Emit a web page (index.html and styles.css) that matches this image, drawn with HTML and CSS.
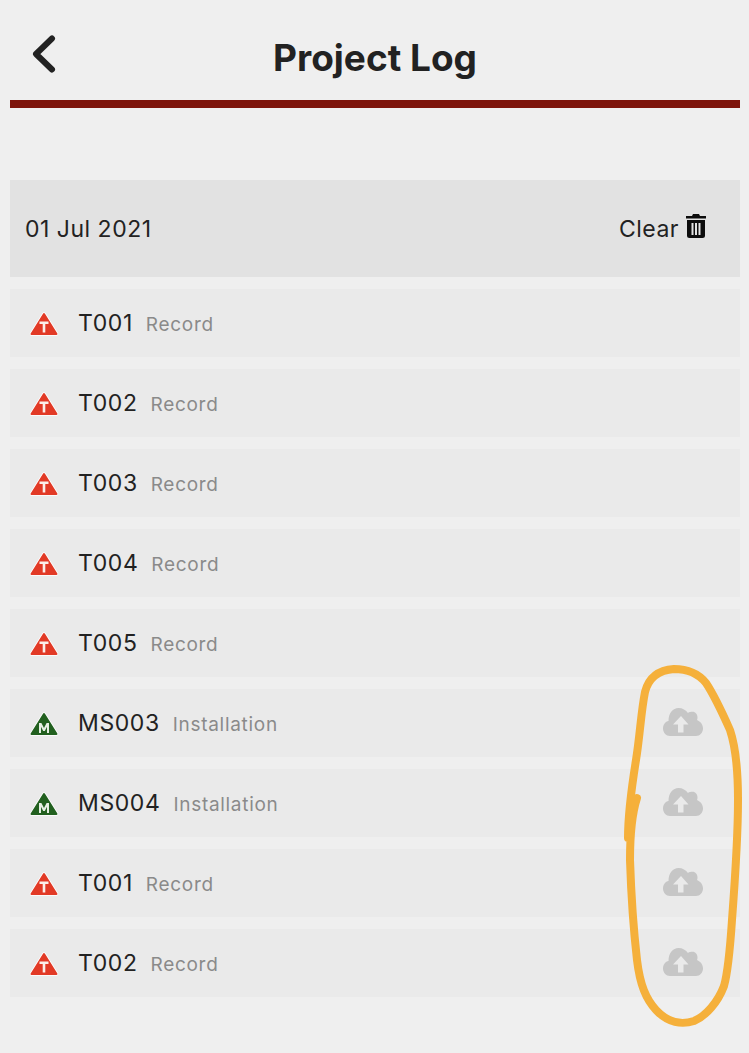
FILE: index.html
```html
<!DOCTYPE html>
<html lang="en">
<head>
    <meta charset="UTF-8">
    <meta name="viewport" content="width=device-width, initial-scale=1.0">
    <title>Project Log</title>
    <link rel="stylesheet" href="styles.css">
</head>
<body>
    <!-- Page title with back arrow -->
    <header class="topBar">
        <svg class="backIcon" viewBox="0 0 26 40" aria-hidden="true">
            <path d="M22 3.500 L6 19 L22 34.500" />
        </svg>
        <h1>Project Log</h1>
    </header>

    <section class="dateRow">
        <span class="dateText">01 Jul 2021</span>
        <span class="clearBtn">
            Clear
            <svg class="trashIcon" viewBox="0 0 22 24" aria-hidden="true">
                <path d="M8 0 H14 L15 2 H21 V4.500 H1 V2 H7 Z" />
                <path fill-rule="evenodd" d="M2 6 H20 V21.500 Q20 24 17.500 24 H4.500 Q2 24 2 21.500 Z M6.500 9 V21 H8.500 V9 Z M10 9 V21 H12 V9 Z M13.500 9 V21 H15.500 V9 Z" />
            </svg>
        </span>
    </section>

    <!-- Log items -->
    <ul class="logList">
        <li class="logRow">
            <svg class="typeIcon" viewBox="0 0 30 28"><use href="#triRed" /></svg>
            <span class="logName">T001</span><span class="logType">Record</span>
        </li>
        <li class="logRow">
            <svg class="typeIcon" viewBox="0 0 30 28"><use href="#triRed" /></svg>
            <span class="logName">T002</span><span class="logType">Record</span>
        </li>
        <li class="logRow">
            <svg class="typeIcon" viewBox="0 0 30 28"><use href="#triRed" /></svg>
            <span class="logName">T003</span><span class="logType">Record</span>
        </li>
        <li class="logRow">
            <svg class="typeIcon" viewBox="0 0 30 28"><use href="#triRed" /></svg>
            <span class="logName">T004</span><span class="logType">Record</span>
        </li>
        <li class="logRow">
            <svg class="typeIcon" viewBox="0 0 30 28"><use href="#triRed" /></svg>
            <span class="logName">T005</span><span class="logType">Record</span>
        </li>
        <li class="logRow">
            <svg class="typeIcon" viewBox="0 0 30 28"><use href="#triGreen" /></svg>
            <span class="logName">MS003</span><span class="logType">Installation</span>
            <svg class="cloudIcon" viewBox="0 0 40 28"><use href="#cloud" /></svg>
        </li>
        <li class="logRow">
            <svg class="typeIcon" viewBox="0 0 30 28"><use href="#triGreen" /></svg>
            <span class="logName">MS004</span><span class="logType">Installation</span>
            <svg class="cloudIcon" viewBox="0 0 40 28"><use href="#cloud" /></svg>
        </li>
        <li class="logRow">
            <svg class="typeIcon" viewBox="0 0 30 28"><use href="#triRed" /></svg>
            <span class="logName">T001</span><span class="logType">Record</span>
            <svg class="cloudIcon" viewBox="0 0 40 28"><use href="#cloud" /></svg>
        </li>
        <li class="logRow">
            <svg class="typeIcon" viewBox="0 0 30 28"><use href="#triRed" /></svg>
            <span class="logName">T002</span><span class="logType">Record</span>
            <svg class="cloudIcon" viewBox="0 0 40 28"><use href="#cloud" /></svg>
        </li>
    </ul>

    <!-- Hand drawn marker circle over the cloud icons -->
    <svg class="scribble" viewBox="0 0 749 1053" aria-hidden="true">
        <path d="M628 838 C628 815 632 785 636 760 C640 735 641 712 645 692 C649 676 660 670 674 669 C688 669 698 673 706 683 C714 695 722 712 730 730 C736 748 738 770 738 800 C738 840 735 880 732 920 C730 950 728 972 724 986 C718 1002 706 1016 694 1021 C682 1025 668 1023 656 1010 C646 999 640 985 637 960 C633 925 631 890 630 860 C630 845 630 820 637 798" />
    </svg>

    <!-- Shared icon shapes -->
    <svg class="iconDefs" aria-hidden="true">
        <defs>
            <g id="triRed">
                <path d="M15 5 L27.500 25 H2.500 Z" fill="#e23a26" stroke="#fff" stroke-width="3.500" stroke-linejoin="round" />
                <path d="M15 5 L27.500 25 H2.500 Z" fill="#e23a26" stroke="#e23a26" stroke-width="2" stroke-linejoin="round" />
                <path d="M10.500 12.500 H19.500 V15 H16.300 V23.500 H13.700 V15 H10.500 Z" fill="#fbeee9" />
            </g>
            <g id="triGreen">
                <path d="M15 5 L27.500 25 H2.500 Z" fill="#22601f" stroke="#fff" stroke-width="3.500" stroke-linejoin="round" />
                <path d="M15 5 L27.500 25 H2.500 Z" fill="#22601f" stroke="#22601f" stroke-width="2" stroke-linejoin="round" />
                <path d="M10 24 V14 H12.400 L15 19 L17.600 14 H20 V24 H18 V17.800 L15.800 22 H14.200 L12 17.800 V24 Z" fill="#e6efe3" />
            </g>
            <g id="cloud">
                <path fill-rule="evenodd" fill="#c6c6c6" d="M7 28 C3 28 0 24.500 0 20.500 C0 16.500 2.500 13.500 5.500 13 C5.500 5 10 0 15.500 0 C19.500 0 23 2 25 5 C26 4 28 3.800 29.500 3.800 C32.500 3.800 34.500 6.500 34.500 9.500 C34.500 10.500 34.300 11.500 34 12 C37.500 13.500 40 16.500 40 20.500 C40 24.500 37 28 33 28 Z M18 8 L10 16.500 H15 V24.500 H20.500 V16.500 H25.500 Z" />
            </g>
        </defs>
    </svg>
</body>
</html>
```

FILE: styles.css
```css
* {
    margin: 0;
    padding: 0;
    box-sizing: border-box;
    font-family: Inter, "Liberation Sans", Arial, sans-serif;
}

body {
    background-color: #efefef;
    padding: 0 9px 0 10px;
    height: 1053px;
    overflow: hidden;
    color: #222;
}

.topBar {
    position: relative;
    display: flex;
    justify-content: center;
    align-items: center;
    height: 108px;
    padding-top: 16px;
    border-bottom: 8px solid #7d140b;
}

.topBar h1 {
    font-size: 37px;
    font-weight: 700;
    line-height: 40px;
    color: #222;
}

.backIcon {
    position: absolute;
    left: 20px;
    top: 35px;
    width: 26px;
    height: 40px;
}

.backIcon path {
    fill: none;
    stroke: #222;
    stroke-width: 6;
    stroke-linecap: round;
    stroke-linejoin: round;
}

.dateRow {
    display: flex;
    justify-content: space-between;
    align-items: center;
    height: 97px;
    margin-top: 72px;
    padding: 0 33px 0 15px;
    background-color: #e2e2e2;
    font-size: 23px;
    letter-spacing: 0.5px;
}

.clearBtn {
    display: flex;
    align-items: center;
    gap: 6px;
}

.trashIcon {
    width: 22px;
    height: 24px;
    margin-top: -6px;
    fill: #0c0c0c;
}

.logList {
    list-style: none;
    display: flex;
    flex-direction: column;
    gap: 12px;
    margin-top: 12px;
}

.logRow {
    display: flex;
    align-items: center;
    height: 68px;
    padding-left: 19px;
    background-color: #eaeaea;
}

.typeIcon {
    width: 30px;
    height: 28px;
    margin-right: 19px;
}

.logName {
    font-size: 23px;
    letter-spacing: 0.6px;
    margin-top: -1px;
    margin-right: 13px;
}

.logType {
    font-size: 19px;
    letter-spacing: 0.7px;
    margin-top: 2px;
    color: #8a8a8a;
}

.cloudIcon {
    width: 40px;
    height: 28px;
    margin-top: -2px;
    margin-left: auto;
    margin-right: 37px;
}

.scribble {
    position: absolute;
    left: 0;
    top: 0;
    width: 749px;
    height: 1053px;
    pointer-events: none;
}

.scribble path {
    fill: none;
    stroke: #f5b03b;
    stroke-width: 8;
    stroke-linecap: round;
    stroke-linejoin: round;
}

.iconDefs {
    position: absolute;
    width: 0;
    height: 0;
}
```
